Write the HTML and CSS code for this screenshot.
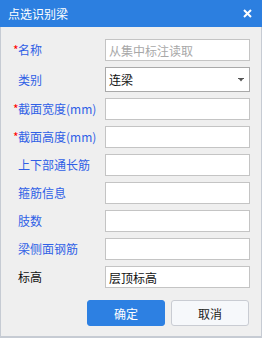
FILE: index.html
```html
<!DOCTYPE html>
<html lang="zh">
<head>
<meta charset="utf-8">
<link rel="stylesheet" href="styles.css">
</head>
<body>
<div class="dialog">
  <div class="titlebar">
    <span class="title">点选识别梁</span>
    <svg class="close" width="9" height="9" viewBox="0 0 9 9"><path d="M1 1L8 8M8 1L1 8" stroke="#fff" stroke-width="2" fill="none"/></svg>
  </div>
  <div class="content">
    <div class="form">
      <label class="lbl blue"><span class="req">*</span>名称</label>
      <div class="field"><span class="ph">从集中标注读取</span></div>

      <label class="lbl blue">类别</label>
      <div class="field select"><span class="val">连梁</span><svg class="arrow" width="6" height="4" viewBox="0 0 6 4"><path d="M0 0H6V1H5L3 3.5L1 1H0Z" fill="#555"/></svg></div>

      <label class="lbl blue"><span class="req">*</span>截面宽度(mm)</label>
      <div class="field"></div>

      <label class="lbl blue"><span class="req">*</span>截面高度(mm)</label>
      <div class="field"></div>

      <label class="lbl blue">上下部通长筋</label>
      <div class="field"></div>

      <label class="lbl blue">箍筋信息</label>
      <div class="field"></div>

      <label class="lbl blue">肢数</label>
      <div class="field"></div>

      <label class="lbl blue">梁侧面钢筋</label>
      <div class="field"></div>

      <label class="lbl black">标高</label>
      <div class="field"><span class="val">层顶标高</span></div>
    </div>
    <div class="buttons">
      <button class="btn primary">确定</button>
      <button class="btn secondary">取消</button>
    </div>
  </div>
</div>
</body>
</html>
```

FILE: styles.css
```css
* { box-sizing: border-box; }
html, body { margin: 0; padding: 0; }
body {
  width: 262px;
  height: 338px;
  font-family: "Noto Sans CJK SC", "Microsoft YaHei", sans-serif;
  font-size: 12px;
}
.dialog {
  width: 262px;
  height: 338px;
  display: flex;
  flex-direction: column;
}
.titlebar {
  height: 27px;
  background: #2c7fe0;
  color: #fff;
  display: flex;
  align-items: center;
  justify-content: space-between;
  padding: 0 10px 0 8px;
  flex: none;
}
.title { font-size: 12px; line-height: 14px; }
.close { display: block; margin-top: 0; }
.content {
  flex: 1;
  background: #efefef;
  border: 1px solid #c6cbd3;
  border-top: none;
  border-bottom-width: 2px;
  padding-top: 12px;
}
.form {
  display: grid;
  grid-template-columns: 104px 145px;
  row-gap: 6px;
  align-items: center;
}
.lbl {
  padding-left: 17px;
  line-height: 16px;
  white-space: nowrap;
}
.lbl.blue { color: #2f5fe6; }
.lbl.black { color: #111; }
.req {
  color: #f00;
  margin-left: -5px;
  display: inline-block;
  width: 5px;
}
.field {
  height: 22px;
  background: #fff;
  border: 1px solid #c4c4c4;
  display: flex;
  align-items: center;
  padding-left: 3px;
  color: #111;
}
.field.select {
  height: 25px;
  border-color: #a9a9a9;
  justify-content: space-between;
  padding-right: 5px;
}
.ph { color: #a8a8a8; }
.arrow { display: block; }
.buttons {
  display: flex;
  gap: 6px;
  padding-left: 86px;
  margin-top: 12px;
}
.btn {
  width: 78px;
  height: 26px;
  border-radius: 3px;
  font-family: inherit;
  font-size: 12px;
  padding: 0;
  cursor: pointer;
}
.btn.primary {
  background: #2d80e2;
  border: 1px solid #2d80e2;
  color: #fff;
}
.btn.secondary {
  background: #f6f8fb;
  border: 1px solid #c9ccd3;
  color: #222;
}
```
